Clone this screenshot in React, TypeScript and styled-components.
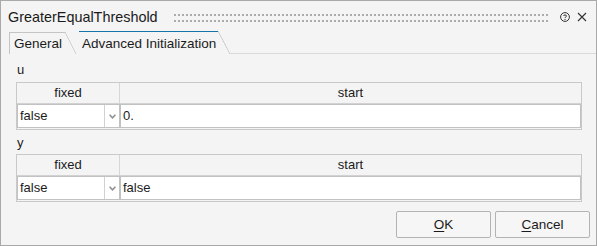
import * as React from 'react';
import styled, { createGlobalStyle } from 'styled-components';

const GlobalStyle = createGlobalStyle`
  html, body {
    margin: 0;
    padding: 0;
    background: #f4f4f4;
  }
  * {
    box-sizing: border-box;
  }
`;

const Window = styled.div`
  width: 597px;
  height: 246px;
  border: 1px solid #a9a9a9;
  background: #f4f4f4;
  font-family: 'Liberation Sans', Arial, sans-serif;
  font-size: 13px;
  color: #1b1b1b;
  display: flex;
  flex-direction: column;
`;

const TitleBar = styled.div`
  height: 30px;
  display: flex;
  align-items: center;
  padding: 2px 9px 0 7px;
`;

const Title = styled.div`
  font-size: 14.4px;
  color: #1a1a1a;
`;

const Grip = styled.div`
  flex: 1;
  height: 8px;
  margin: 2px 11px 0 16px;
  background-image: linear-gradient(90deg, #acacac 2px, transparent 2px),
    linear-gradient(90deg, #acacac 2px, transparent 2px);
  background-size: 4px 2px;
  background-repeat: repeat-x;
  background-position: 0 0, 0 6px;
`;

const IconButton = styled.span<{ $gap?: number }>`
  display: inline-flex;
  width: 10px;
  height: 10px;
  margin-left: ${(p) => p.$gap ?? 0}px;
  color: #3a3a3a;
`;

const TabStrip = styled.div`
  height: 23px;
  display: flex;
  align-items: flex-end;
  padding-left: 8px;
  font-size: 13.5px;
`;

const Tab = styled.div<{ $active?: boolean }>`
  position: relative;
  height: ${(p) => (p.$active ? 23 : 22)}px;
  padding: ${(p) => (p.$active ? '4px 2px 0 3px' : '3px 3px 0 4px')};
  margin-right: ${(p) => (p.$active ? 12 : 14)}px;
  border-top: 1px solid ${(p) => (p.$active ? '#1674a8' : '#c4c4c4')};
  border-left: ${(p) => (p.$active ? 'none' : '1px solid #c4c4c4')};
  white-space: nowrap;
  &::after {
    content: '';
    position: absolute;
    left: 100%;
    top: -1px;
    width: ${(p) => (p.$active ? 12 : 11)}px;
    height: calc(100% + 1px);
    background: linear-gradient(
      to top right,
      transparent calc(50% - 0.7px),
      #c4c4c4 50%,
      transparent calc(50% + 0.7px)
    );
  }
`;

const StripRest = styled.div`
  flex: 1;
  align-self: flex-end;
  border-bottom: 1px solid #dadada;
`;

const Content = styled.div`
  padding: 0 14px 0 15px;
  display: flex;
  flex-direction: column;
`;

const GroupLabel = styled.div<{ $top: number; $bottom: number }>`
  height: 16px;
  line-height: 16px;
  margin-top: ${(p) => p.$top}px;
  margin-bottom: ${(p) => p.$bottom}px;
  padding-left: 1px;
`;

const Table = styled.div`
  border: 1px solid #c9c9c9;
  padding-bottom: 1px;
`;

const HeaderRow = styled.div`
  display: grid;
  grid-template-columns: 103px 1fr;
  height: 21px;
  border-bottom: 1px solid #d2d2d2;
`;

const HeaderCell = styled.div`
  text-align: center;
  line-height: 20px;
  &:first-child {
    border-right: 1px solid #d6d6d6;
  }
`;

const BodyRow = styled.div`
  display: grid;
  grid-template-columns: 103px 1fr;
  height: 24px;
`;

const Combo = styled.div`
  display: flex;
  background: #fff;
  border: 1px solid #c2c2c2;
`;

const ComboText = styled.div`
  flex: 1;
  line-height: 22px;
  padding-left: 2px;
`;

const ComboArrow = styled.div`
  width: 15px;
  border-left: 1px solid #d2d2d2;
  display: flex;
  align-items: center;
  justify-content: center;
`;

const Cell = styled.div`
  background: #fff;
  border: 1px solid #c2c2c2;
  line-height: 22px;
  padding-left: 2px;
`;

const Footer = styled.div`
  display: flex;
  justify-content: flex-end;
  gap: 4px;
  padding: 0 6px 0 0;
  margin-top: 9px;
`;

const Button = styled.button`
  width: 95px;
  height: 27px;
  border: 1px solid #b3b3b3;
  border-radius: 2px;
  background: #f6f6f6;
  font-family: 'Liberation Sans', Arial, sans-serif;
  font-size: 13.5px;
  color: #1b1b1b;
  padding: 0;
  u {
    text-decoration-thickness: 1px;
    text-underline-offset: 2px;
  }
`;

function Chevron() {
  return (
    <svg width="7" height="5" viewBox="0 0 7 5">
      <path d="M0.6 0.8 L3.5 3.8 L6.4 0.8" fill="none" stroke="#8e8e8e" strokeWidth="1.5" />
    </svg>
  );
}

function HelpIcon() {
  return (
    <svg width="10" height="10" viewBox="0 0 10 10">
      <circle cx="5" cy="5" r="4.4" fill="none" stroke="#333" strokeWidth="1" />
      <path
        d="M3.5 4 C3.5 2.6 6.5 2.6 6.5 4 C6.5 5 5 5 5 6"
        fill="none"
        stroke="#333"
        strokeWidth="1"
      />
      <circle cx="5" cy="7.4" r="0.6" fill="#333" />
    </svg>
  );
}

function CloseIcon() {
  return (
    <svg width="10" height="10" viewBox="0 0 10 10">
      <path d="M1 1 L9 9 M9 1 L1 9" stroke="#333" strokeWidth="1.1" />
    </svg>
  );
}

type Param = { name: string; fixed: string; start: string };

const params: Param[] = [
  { name: 'u', fixed: 'false', start: '0.' },
  { name: 'y', fixed: 'false', start: 'false' },
];

function ParamTable({ fixed, start }: { fixed: string; start: string }) {
  return (
    <Table>
      <HeaderRow>
        <HeaderCell>fixed</HeaderCell>
        <HeaderCell>start</HeaderCell>
      </HeaderRow>
      <BodyRow>
        <Combo>
          <ComboText>{fixed}</ComboText>
          <ComboArrow>
            <Chevron />
          </ComboArrow>
        </Combo>
        <Cell>{start}</Cell>
      </BodyRow>
    </Table>
  );
}

export default function App() {
  return (
    <>
      <GlobalStyle />
      <Window>
        <TitleBar>
          <Title>GreaterEqualThreshold</Title>
          <Grip />
          <IconButton>
            <HelpIcon />
          </IconButton>
          <IconButton $gap={7}>
            <CloseIcon />
          </IconButton>
        </TitleBar>
        <TabStrip>
          <Tab>General</Tab>
          <Tab $active>Advanced Initialization</Tab>
          <StripRest />
        </TabStrip>
        <Content>
          {params.map((p, i) => (
            <React.Fragment key={p.name}>
              <GroupLabel $top={i === 0 ? 8 : 5} $bottom={i === 0 ? 4 : 3}>
                {p.name}
              </GroupLabel>
              <ParamTable fixed={p.fixed} start={p.start} />
            </React.Fragment>
          ))}
        </Content>
        <Footer>
          <Button>
            <u>O</u>K
          </Button>
          <Button>
            <u>C</u>ancel
          </Button>
        </Footer>
      </Window>
    </>
  );
}
